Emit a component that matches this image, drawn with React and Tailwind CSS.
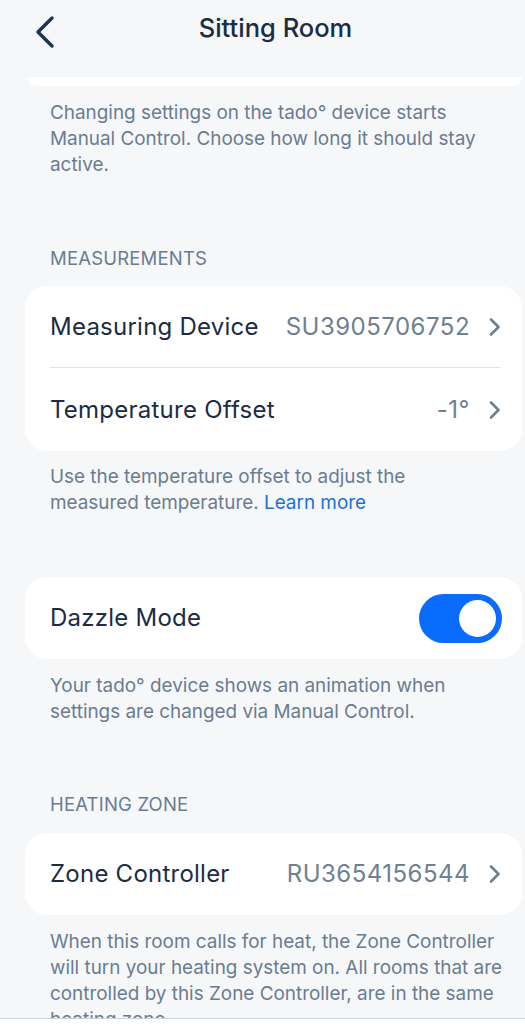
import React from "react";

const Chevron = () => (
  <svg width="14" height="20" viewBox="0 0 14 20" className="shrink-0" fill="none">
    <path d="M3 2.5 L10.5 10 L3 17.5" stroke="#6f8093" strokeWidth="2.6" strokeLinecap="round" strokeLinejoin="round" />
  </svg>
);

const Note = ({ children, className = "" }) => (
  <p className={"pl-[50px] text-[18.9px] leading-[26px] text-[#6b7c90] " + className}>{children}</p>
);

const Section = ({ children, className = "" }) => (
  <div className={"pl-[50px] text-[18.5px] leading-[24px] tracking-[0.01em] text-[#6b7c90] " + className}>{children}</div>
);

const Row = ({ label, value, h = "h-[81px]" }) => (
  <div className={"flex items-center justify-between pl-[25px] pr-[20px] " + h}>
    <span className="text-[24px] tracking-[0.01em] text-[#1c2c42]">{label}</span>
    <div className="flex items-center gap-[18px]">
      <span className="text-[24px] tracking-[0.02em] text-[#6f8093]">{value}</span>
      <Chevron />
    </div>
  </div>
);

export default function App() {
  return (
    <div
      className="relative h-[1024px] w-full overflow-hidden bg-[#f5f7f9]"
      style={{ fontFamily: "Inter, 'Noto Sans', sans-serif" }}
    >
      <header className="relative flex h-[77px] items-start justify-center pt-[11px]">
        <svg width="24" height="34" viewBox="0 0 24 34" className="absolute left-[33px] top-[15px]" fill="none">
          <path d="M19 3 L5 17 L19 31" stroke="#1f3350" strokeWidth="3.4" strokeLinecap="round" strokeLinejoin="round" />
        </svg>
        <h1 className="ml-[26px] text-[25.5px] font-medium leading-[34px] text-[#1c2c42]">Sitting Room</h1>
      </header>

      <div className="ml-[27px] mr-[3px] h-[9px] rounded-b-[10px] bg-white" />

      <Note className="mt-[14px] pr-[30px]">
        Changing settings on the tado° device starts Manual Control. Choose how long it should stay active.
      </Note>

      <Section className="mt-[68px]">MEASUREMENTS</Section>

      <div className="ml-[25px] mr-[3px] mt-[16px] rounded-[22px] bg-white">
        <Row label="Measuring Device" value="SU3905706752" />
        <div className="ml-[25px] mr-[22px] h-px bg-[#dde3ea]" />
        <Row label="Temperature Offset" value="-1°" h="h-[83px]" />
      </div>

      <Note className="mt-[13px] pr-[30px]">
        Use the temperature offset to adjust the measured temperature.{" "}
        <span className="text-[#1a6fe0]">Learn more</span>
      </Note>

      <div className="ml-[25px] mr-[3px] mt-[61px] flex h-[82px] items-center justify-between rounded-[22px] bg-white pl-[25px] pr-[20px]">
        <span className="text-[24px] tracking-[0.01em] text-[#1c2c42]">Dazzle Mode</span>
        <div className="flex h-[49px] w-[83px] items-center justify-end rounded-full bg-[#0a6cfe] pr-[6px]">
          <div className="h-[37px] w-[37px] rounded-full bg-white" />
        </div>
      </div>

      <Note className="mt-[14px] pr-[30px]">
        Your tado° device shows an animation when settings are changed via Manual Control.
      </Note>

      <Section className="mt-[67px]">HEATING ZONE</Section>

      <div className="ml-[25px] mr-[3px] mt-[17px] rounded-[22px] bg-white">
        <Row label="Zone Controller" value="RU3654156544" h="h-[82px]" />
      </div>

      <Note className="mt-[14px] pr-[4px]">
        When this room calls for heat, the Zone Controller
        <br />
        will turn your heating system on. All rooms that are
        <br />
        controlled by this Zone Controller, are in the same
        <br />
        heating zone.
      </Note>

      <div className="absolute bottom-0 left-0 right-0 h-[6px] border-t border-[#cfd4da] bg-white" />
    </div>
  );
}
